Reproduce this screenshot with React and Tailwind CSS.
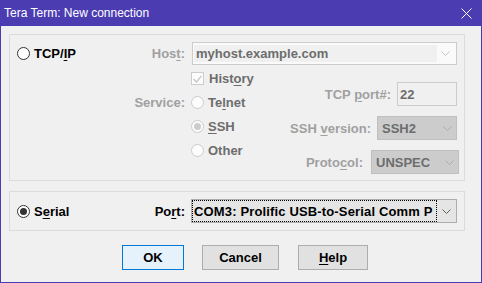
import React from "react";

function Radio({ checked, disabled }) {
  return (
    <span
      className={
        disabled
          ? "shrink-0 inline-flex w-[13px] h-[13px] rounded-full border border-[#cccccc] bg-[#fcfcfc] items-center justify-center"
          : "shrink-0 inline-flex w-[13px] h-[13px] rounded-full border border-[#333333] bg-white items-center justify-center"
      }
    >
      {checked && (
        <span
          className={
            disabled
              ? "w-[7px] h-[7px] rounded-full bg-[#cccccc]"
              : "w-[7px] h-[7px] rounded-full bg-[#333333]"
          }
        />
      )}
    </span>
  );
}

function Chevron({ color }) {
  return (
    <svg width="9" height="5" viewBox="0 0 9 5" className="shrink-0">
      <path d="M0.5 0.5 L4.5 4.5 L8.5 0.5" fill="none" stroke={color} strokeWidth="1" />
    </svg>
  );
}

function U({ children }) {
  return <span className="underline underline-offset-2 decoration-1">{children}</span>;
}

export default function App() {
  return (
    <div className="w-[482px] h-[283px] bg-[#4b3cb2] flex flex-col font-['Liberation_Sans',Arial,sans-serif] text-[13px] leading-none select-none">
      {/* Title bar */}
      <div className="h-[26px] flex items-center justify-between pl-[4px] pr-[10px] text-white">
        <span className="text-[12px] font-normal">Tera Term: New connection</span>
        <svg width="11" height="11" viewBox="0 0 11 11">
          <path d="M0.5 0.5 L10.5 10.5 M10.5 0.5 L0.5 10.5" stroke="white" strokeWidth="1" />
        </svg>
      </div>

      {/* Body */}
      <div className="flex-1 mx-[1px] mb-[1px] bg-[#f0f0f0] pt-[8px] pl-[8px] flex flex-col font-bold">
        {/* TCP/IP group */}
        <div className="w-[456px] h-[147px] border border-[#dcdcdc] flex flex-col">
          <div className="mt-[7px] h-[23px] flex items-center">
            <div className="w-[175px] pl-[7px] flex items-center justify-between">
              <div className="flex items-center gap-[4px] text-black">
                <Radio />
                <span>
                  TCP/<U>I</U>P
                </span>
              </div>
              <span className="text-[#a0a0a0]">
                Hos<U>t</U>:
              </span>
            </div>
            <div className="ml-[7px] w-[265px] h-[23px] border border-[#cccccc] bg-[#fafafa] flex items-center p-[2px] pl-[1px]">
              <div className="w-[243px] h-full bg-[#f0f0f0] pl-[2px] text-[#6d6d6d] flex items-center">
                myhost.example.com
              </div>
              <div className="flex-1 flex items-center justify-center">
                <Chevron color="#c4c4c4" />
              </div>
            </div>
          </div>

          <div className="flex">
            <div className="w-[175px] flex justify-end pt-[25px]">
              <div className="h-[24px] flex items-center text-[#a0a0a0]">Service:</div>
            </div>
            <div className="ml-[6px] flex flex-col text-[#6d6d6d]">
              <div className="mt-[7px] h-[13px] flex items-center gap-[5px]">
                <span className="shrink-0 w-[13px] h-[13px] border border-[#cccccc] bg-[#fcfcfc] flex items-center justify-center">
                  <svg width="9" height="8" viewBox="0 0 9 8">
                    <path d="M0.5 4 L3.5 7 L8.5 0.8" fill="none" stroke="#c4c4c4" strokeWidth="1.2" />
                  </svg>
                </span>
                <span>
                  Hist<U>o</U>ry
                </span>
              </div>
              <div className="mt-[5px] h-[24px] flex items-center gap-[4px]">
                <Radio disabled />
                <span>
                  Te<U>l</U>net
                </span>
              </div>
              <div className="h-[24px] flex items-center gap-[4px]">
                <Radio disabled checked />
                <span>
                  <U>S</U>SH
                </span>
              </div>
              <div className="h-[24px] flex items-center gap-[4px]">
                <Radio disabled />
                <span>Other</span>
              </div>
            </div>
            <div className="flex-1 flex flex-col items-end pr-[5px] pt-[17px]">
              <div className="h-[24px] mr-[2px] flex items-center">
                <span className="text-[#a0a0a0]">
                  TCP <U>p</U>ort#:
                </span>
                <div className="ml-[6px] w-[60px] h-[24px] border border-[#cccccc] bg-[#f0f0f0] pl-[2px] flex items-center text-[#6d6d6d]">
                  22
                </div>
              </div>
              <div className="mt-[10px] h-[24px] mr-[2px] flex items-center">
                <span className="text-[#a0a0a0]">
                  SSH <U>v</U>ersion:
                </span>
                <div className="ml-[6px] w-[80px] h-[24px] border border-[#bfbfbf] bg-[#cccccc] pl-[4px] pr-[4px] flex items-center justify-between text-[#6d6d6d]">
                  <span>SSH2</span>
                  <Chevron color="#adadad" />
                </div>
              </div>
              <div className="mt-[10px] h-[24px] flex items-center">
                <span className="text-[#a0a0a0]">
                  Proto<U>c</U>ol:
                </span>
                <div className="ml-[8px] w-[88px] h-[24px] border border-[#bfbfbf] bg-[#cccccc] pl-[4px] pr-[4px] flex items-center justify-between text-[#6d6d6d]">
                  <span>UNSPEC</span>
                  <Chevron color="#adadad" />
                </div>
              </div>
            </div>
          </div>
        </div>

        {/* Serial group */}
        <div className="mt-[10px] w-[456px] h-[40px] border border-[#dcdcdc] flex items-center">
          <div className="w-[175px] pl-[7px] flex items-center justify-between text-black">
            <div className="flex items-center gap-[4px]">
              <Radio checked />
              <span>
                S<U>e</U>rial
              </span>
            </div>
            <span>
              Po<U>r</U>t:
            </span>
          </div>
          <div className="ml-[6px] w-[266px] h-[24px] border border-[#adadad] bg-[#e5e5e5] flex items-center">
            <div className="w-[245px] h-full border border-dotted border-black pl-[1px] flex items-center overflow-hidden whitespace-nowrap text-black tracking-[0.15px]">
              COM3: Prolific USB-to-Serial Comm P
            </div>
            <div className="flex-1 flex items-center justify-center">
              <Chevron color="#606060" />
            </div>
          </div>
        </div>

        {/* Buttons */}
        <div className="mt-[14px] flex text-black">
          <div className="ml-[113px] w-[62px] h-[25px] border border-[#0078d7] bg-[#e5f1fb] flex items-center justify-center">
            OK
          </div>
          <div className="ml-[18px] w-[77px] h-[25px] border border-[#adadad] bg-[#e1e1e1] flex items-center justify-center">
            Cancel
          </div>
          <div className="ml-[19px] w-[70px] h-[25px] border border-[#adadad] bg-[#e1e1e1] flex items-center justify-center">
            <span>
              <U>H</U>elp
            </span>
          </div>
        </div>
      </div>
    </div>
  );
}
